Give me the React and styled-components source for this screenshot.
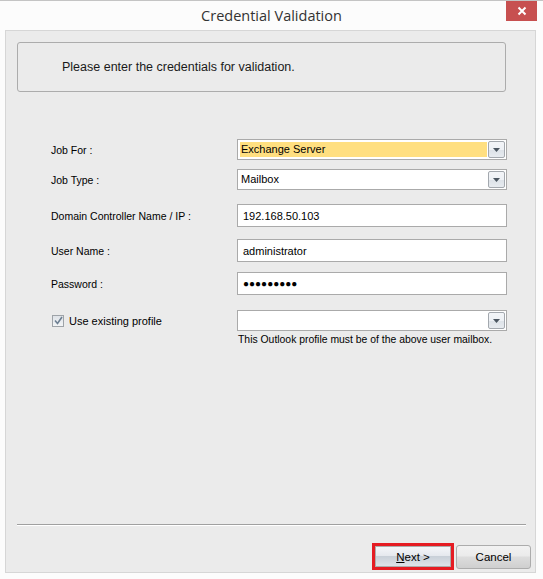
import React from 'react';
import styled, { createGlobalStyle } from 'styled-components';

const GlobalStyle = createGlobalStyle`
  html, body {
    margin: 0;
    padding: 0;
    background: #fcfcfc;
  }
  * { box-sizing: border-box; }
`;

const rows = [
  { label: 'Job For :', kind: 'combo', value: 'Exchange Server', selected: true, top: 47 },
  { label: 'Job Type :', kind: 'combo', value: 'Mailbox', top: 9 },
  { label: 'Domain Controller Name / IP :', kind: 'text', value: '192.168.50.103', top: 14 },
  { label: 'User Name :', kind: 'text', value: 'administrator', top: 12 },
  { label: 'Password :', kind: 'password', value: '●●●●●●●●●', top: 10 },
];

const DownArrow = () => (
  <svg width='7' height='4' viewBox='0 0 7 4'>
    <path d='M0 0 L7 0 L3.5 4 Z' fill='#4b5661' />
  </svg>
);

const App = () => {
  return (
    <>
      <GlobalStyle />
      <Window>
        <TitleBar>
          <span />
          <Title>Credential Validation</Title>
          <CloseButton>
            <svg width='10' height='10' viewBox='0 0 10 10'>
              <path d='M1.5 1.5 L8.5 8.5 M8.5 1.5 L1.5 8.5' stroke='#fff' strokeWidth='2' />
            </svg>
          </CloseButton>
        </TitleBar>
        <Client>
          <Header>Please enter the credentials for validation.</Header>
          <Form>
            {rows.map((row) => (
              <Row key={row.label} $top={row.top}>
                <Label>{row.label}</Label>
                {row.kind === 'combo' ? (
                  <Combo>
                    <ComboText $selected={row.selected}>{row.value}</ComboText>
                    <ArrowButton>
                      <DownArrow />
                    </ArrowButton>
                  </Combo>
                ) : (
                  <TextBox $password={row.kind === 'password'}>{row.value}</TextBox>
                )}
              </Row>
            ))}
            <Row $top={15}>
              <CheckLabel>
                <CheckBox>
                  <svg width='9' height='9' viewBox='0 0 9 9'>
                    <path d='M1 4.5 L3.5 7.5 L8 1' stroke='#6d7f92' strokeWidth='1.6' fill='none' />
                  </svg>
                </CheckBox>
                Use existing profile
              </CheckLabel>
              <Combo>
                <ComboText />
                <ArrowButton>
                  <DownArrow />
                </ArrowButton>
              </Combo>
            </Row>
            <Hint>This Outlook profile must be of the above user mailbox.</Hint>
          </Form>
          <Divider />
          <ButtonBar>
            <Focus>
              <Button>
                <u>N</u>ext &gt;
              </Button>
            </Focus>
            <Button>Cancel</Button>
          </ButtonBar>
        </Client>
      </Window>
    </>
  );
};

export default App;

const Window = styled.div`
  width: 543px;
  height: 579px;
  display: flex;
  flex-direction: column;
  background: #fcfcfc;
  border-top: 1px solid #c4c4c4;
  font-family: 'Liberation Sans', Arial, sans-serif;
  font-size: 10.5px;
  color: #000;
`;

const TitleBar = styled.div`
  height: 29px;
  display: grid;
  grid-template-columns: 1fr auto 1fr;
  align-items: start;
`;

const Title = styled.div`
  font-family: 'Open Sans', 'Noto Sans', sans-serif;
  font-size: 14.5px;
  color: #333;
  line-height: 29px;
`;

const CloseButton = styled.div`
  justify-self: end;
  margin-right: 6px;
  width: 31px;
  height: 20px;
  background: #c75050;
  display: flex;
  align-items: center;
  justify-content: center;
`;

const Client = styled.div`
  flex: 1;
  margin: 0 7px 6px 5px;
  border: 1px solid #d6d6d6;
  background: #ebebeb;
  display: flex;
  flex-direction: column;
`;

const Header = styled.div`
  margin: 11px 29px 0 11px;
  height: 50px;
  border: 1px solid #acacac;
  border-radius: 3px;
  padding-left: 44px;
  display: flex;
  align-items: center;
  font-size: 12.5px;
  color: #1a1a1a;
`;

const Form = styled.div`
  flex: 1;
  padding-left: 45px;
  display: flex;
  flex-direction: column;
`;

const Row = styled.div`
  margin-top: ${(p) => p.$top}px;
  display: grid;
  grid-template-columns: 186px 270px;
  align-items: center;
`;

const Label = styled.div`
  white-space: nowrap;
`;

const Combo = styled.div`
  height: 21px;
  border: 1px solid #aaaaaa;
  background: #fff;
  display: flex;
  align-items: center;
  padding: 0 1px 0 2px;
  gap: 1px;
  font-size: 11px;
`;

const ComboText = styled.div`
  flex: 1;
  height: 15px;
  line-height: 15px;
  padding-left: 1px;
  background: ${(p) => (p.$selected ? '#ffdf80' : 'transparent')};
`;

const ArrowButton = styled.div`
  width: 17px;
  height: 17px;
  border: 1px solid #a3a8ae;
  border-radius: 2px;
  background: linear-gradient(#f3f5f8 0%, #eef1f5 50%, #dde2e8 51%, #e7ebef 100%);
  display: flex;
  align-items: center;
  justify-content: center;
  padding-top: 1px;
`;

const TextBox = styled.div`
  height: 23px;
  border: 1px solid #aaaaaa;
  background: #fff;
  padding-left: ${(p) => (p.$password ? '5px' : '5px')};
  display: flex;
  align-items: center;
  font-size: ${(p) => (p.$password ? '10px' : '11px')};
`;

const CheckLabel = styled.label`
  display: flex;
  align-items: center;
  gap: 5px;
  padding-left: 1px;
  font-size: 11px;
`;

const CheckBox = styled.span`
  width: 12px;
  height: 12px;
  border: 1px solid #9ea3a8;
  background: linear-gradient(#dfe3e8, #f2f4f6);
  display: flex;
  align-items: center;
  justify-content: center;
`;

const Hint = styled.div`
  margin: 3px 0 0 187px;
  font-size: 10.4px;
`;

const Divider = styled.div`
  margin: 0 9px 0 11px;
  border-top: 1px solid #a0a0a0;
  border-bottom: 1px solid #fff;
`;

const ButtonBar = styled.div`
  display: flex;
  justify-content: flex-end;
  align-items: center;
  gap: 2px;
  margin: 17px 4px 2px 0;
`;

const Focus = styled.div`
  border: 3px solid #e51c23;
  padding: 0;
`;

const Button = styled.div`
  width: 75px;
  height: 24px;
  border: 1px solid #acacac;
  border-radius: 3px;
  background: linear-gradient(#f2f2f2 0%, #ebebeb 45%, #dddddd 50%, #cfcfcf 100%);
  display: flex;
  align-items: center;
  justify-content: center;
  font-size: 11.5px;
  ${Focus} & {
    width: 76px;
    height: 21px;
    border-radius: 0;
    background: linear-gradient(#f4f6f9 0%, #e6e9ee 45%, #c9d0d8 50%, #dee3e9 100%);
  }
`;
